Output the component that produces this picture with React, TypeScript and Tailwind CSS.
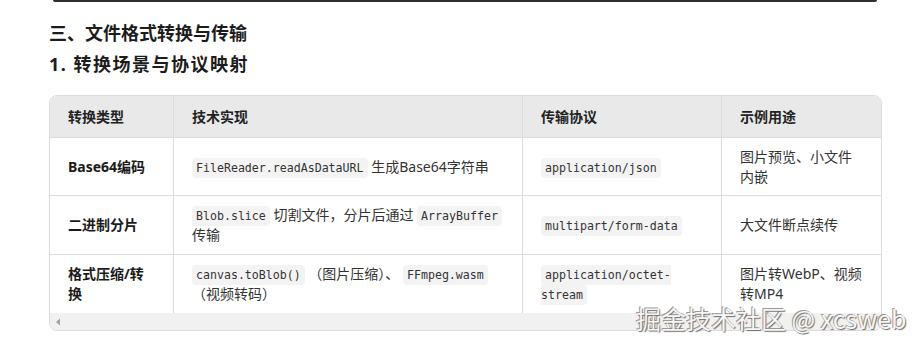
import React from "react";

const code =
  "font-['DejaVu_Sans_Mono',monospace] text-[11.6px] leading-[14px] bg-[#f3f3f3] text-[#333] px-[4px] py-[3px] rounded-[4px]";

function Code({ children }: { children: React.ReactNode }) {
  return <code className={code}>{children}</code>;
}

const cell = "flex items-center px-[18px] leading-[20px]";
const cellL = `${cell} border-l border-[#dcdcdc]`;

const rows: { type: string; impl: React.ReactNode; proto: React.ReactNode; use: string; h: string }[] = [
  {
    type: "Base64编码",
    impl: (
      <span>
        <Code>FileReader.readAsDataURL</Code> 生成Base64字符串
      </span>
    ),
    proto: <Code>application/json</Code>,
    use: "图片预览、小文件内嵌",
    h: "h-[58px] border-b border-[#dcdcdc]",
  },
  {
    type: "二进制分片",
    impl: (
      <span>
        <Code>Blob.slice</Code> 切割文件，分片后通过 <Code>ArrayBuffer</Code> 传输
      </span>
    ),
    proto: <Code>multipart/form-data</Code>,
    use: "大文件断点续传",
    h: "h-[59px] border-b border-[#dcdcdc]",
  },
  {
    type: "格式压缩/转换",
    impl: (
      <span>
        <Code>canvas.toBlob()</Code> （图片压缩）、 <Code>FFmpeg.wasm</Code> （视频转码）
      </span>
    ),
    proto: <Code>application/octet-stream</Code>,
    use: "图片转WebP、视频转MP4",
    h: "h-[58px]",
  },
];

export default function App() {
  return (
    <div className="relative w-[924px] h-[346px] overflow-hidden bg-white text-[#333] font-['Noto_Sans','Noto_Sans_CJK_SC',sans-serif]">
      {/* end of the previous block */}
      <div className="ml-[53px] w-[824px] h-[2px] bg-[#2e2e2e] rounded-b-[2px]" />

      <div className="px-[49px]">
        <h2 className="mt-[18px] text-[18px] leading-[26px] font-bold text-[#1c1c1c]">
          三、文件格式转换与传输
        </h2>
        <h3 className="mt-[5px] text-[18px] leading-[26px] font-bold tracking-[1.5px] text-[#1c1c1c]">
          1. 转换场景与协议映射
        </h3>

        <div className="mt-[18px] w-[833px] border border-[#dcdcdc] rounded-[8px] overflow-hidden text-[14px]">
          {/* header */}
          <div className="grid grid-cols-[123px_349px_199px_160px] h-[42px] bg-[#e9e9e9] border-b border-[#dcdcdc] font-bold text-[#222]">
            <div className={cell}>转换类型</div>
            <div className={cellL}>技术实现</div>
            <div className={cellL}>传输协议</div>
            <div className={cellL}>示例用途</div>
          </div>

          {rows.map((r) => (
            <div key={r.type} className={`grid grid-cols-[123px_349px_199px_160px] ${r.h}`}>
              <div className={`${cell} font-bold text-[#1a1a1a]`}>{r.type}</div>
              <div className={cellL}>{r.impl}</div>
              <div className={cellL}>
                <span>{r.proto}</span>
              </div>
              <div className={cellL}>{r.use}</div>
            </div>
          ))}

          {/* horizontal scrollbar */}
          <div className="h-[17px] bg-[#f1f1f1] flex items-center pl-[5px]">
            <svg width="6" height="8" viewBox="0 0 6 8">
              <path d="M5 0.5 L1 4 L5 7.5 Z" fill="#a3a3a3" />
            </svg>
          </div>
        </div>
      </div>

      {/* watermark */}
      <div className="absolute left-[636px] top-[303px] text-[25px] leading-[30px] whitespace-nowrap text-[#f6f6f6] font-['Noto_Sans_CJK_SC',sans-serif] [text-shadow:1px_1px_1px_#6b6b6b,-1px_-1px_0_#9a9a9a]">
        掘金技术社区 @ xcsweb
      </div>
    </div>
  );
}
